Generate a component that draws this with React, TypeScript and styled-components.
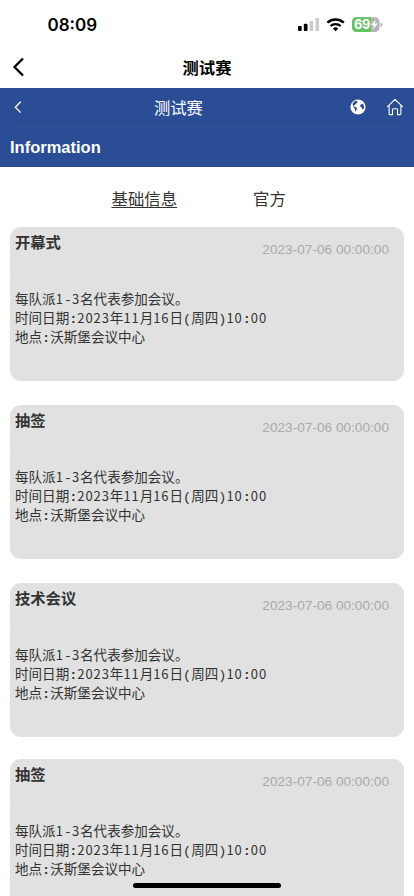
import React from "react";
import styled, { createGlobalStyle } from "styled-components";

const Global = createGlobalStyle`
  * { box-sizing: border-box; }
  html, body { margin: 0; height: 896px; overflow: hidden; background: #fff; }
  body { font-family: "Liberation Sans", "Noto Sans CJK SC", sans-serif; color: #333; }
`;

const Screen = styled.div`
  position: relative;
  width: 414px;
  height: 896px;
  overflow: hidden;
  background: #fff;
`;
const StatusBar = styled.div`
  height: 48px;
  display: flex;
  align-items: center;
  justify-content: space-between;
  padding: 2px 31px 0 47.5px;
`;
const Clock = styled.span`
  font: 600 17px/24px Inter, sans-serif;
  color: #000;
`;
const StatusIcons = styled.div`
  display: flex;
  align-items: center;
  svg { display: block; }
`;
const NavBar = styled.div`
  height: 40px;
  display: grid;
  grid-template-columns: 40px 1fr 40px;
  align-items: center;
  padding-bottom: 2px;
`;
const NavBack = styled.svg`
  margin-left: 11px;
  display: block;
`;
const NavTitle = styled.div`
  text-align: center;
  font: 700 16.3px/24px "Noto Sans CJK SC", sans-serif;
  color: #000;
`;
const Header = styled.header`
  height: 78.5px;
  padding: 0 10px;
  background: #2b4d95;
  color: #fff;
`;
const HeaderTop = styled.div`
  height: 39px;
  display: flex;
  align-items: center;
  border-bottom: 1px solid #35548f;
  svg { display: block; flex: none; }
`;
const HeaderTitle = styled.div`
  width: 50px;
  margin: 0 147px 0 132px;
  white-space: nowrap;
  font: 400 16.3px/24px "Noto Sans CJK SC", sans-serif;
`;
const HeaderIcons = styled.div`
  display: flex;
  align-items: center;
  gap: 20px;
`;
const Section = styled.div`
  font: 700 16.5px/41px "Liberation Sans", sans-serif;
`;
const Tabs = styled.nav`
  height: 59px;
  display: flex;
  gap: 76px;
  padding: 19px 0 0 111.5px;
`;
const Tab = styled.span<{ $active?: boolean }>`
  font: 400 16.4px/24px "Noto Sans CJK SC", sans-serif;
  text-decoration: ${(p) => (p.$active ? "underline" : "none")};
  text-decoration-thickness: 1px;
  text-underline-offset: 2px;
`;
const List = styled.main`
  padding: 1px 10px 0;
`;
const Card = styled.article<{ $gap: number }>`
  height: 154.5px;
  margin-bottom: ${(p) => p.$gap}px;
  border-radius: 11px;
  background: #e1e1e1;
`;
const CardHead = styled.div`
  height: 47.5px;
  display: flex;
  justify-content: space-between;
  padding: 0 15px 0 5px;
  border-bottom: 1px solid #e6e6e6;
`;
const CardTitle = styled.h2`
  margin: 2px 0 0;
  font: 700 15.3px/24px "Noto Sans CJK SC", sans-serif;
`;
const CardDate = styled.time`
  margin-top: 11.4px;
  font: 400 13.65px/24px "Liberation Sans", sans-serif;
  color: #aaa;
`;
const CardBody = styled.div`
  padding: 16.5px 5px 0;
`;
const Line = styled.div`
  height: 19.4px;
  white-space: pre;
  font: 400 13.55px/19.4px "Liberation Mono", "Noto Sans CJK SC", monospace;
`;
const Digits = styled.span`
  font-family: "Noto Sans CJK SC", sans-serif;
  font-size: 13px;
  line-height: 0;
  letter-spacing: 0.91px;
`;
const Colon = styled.span`
  font-weight: 700;
`;
const HomeIndicator = styled.div`
  position: absolute;
  left: 133px;
  bottom: 8px;
  width: 148px;
  height: 5px;
  border-radius: 3px;
  background: #000;
`;

const cards = [
  { title: "开幕式", gap: 23.5 },
  { title: "抽签", gap: 23.5 },
  { title: "技术会议", gap: 21.5 },
  { title: "抽签", gap: 0 },
];
const details = ["每队派1-3名代表参加会议。", "时间日期:2023年11月16日(周四)10:00", "地点:沃斯堡会议中心"];

const renderRuns = (line: string) =>
  line.split(/(\d+|:)/).map((run, i) => {
    if (run === ":") return <Colon key={i}>:</Colon>;
    if (/^\d+$/.test(run)) return <Digits key={i}>{run}</Digits>;
    return run;
  });

const StatusGlyphs = () => (
  <svg width="86" height="18" viewBox="297 16 86 18">
    <rect x="298" y="26" width="3.7" height="5" rx="1" fill="#000" />
    <rect x="303.8" y="23.7" width="3.7" height="7.3" rx="1" fill="#000" />
    <rect x="309.6" y="21" width="3.7" height="10" rx="1" fill="#ccc" />
    <rect x="315.4" y="18" width="3.7" height="13" rx="1" fill="#ccc" />
    <path d="M327.4 22.6a12.2 12.2 0 0 1 16.4 0" fill="none" stroke="#000" strokeWidth="2.4" />
    <path d="M330.5 26a7.7 7.7 0 0 1 10.2 0" fill="none" stroke="#000" strokeWidth="2.3" />
    <path d="M332.9 28.5a4 4 0 0 1 5.4 0L335.6 31.3Z" fill="#000" />
    <clipPath id="cell"><rect x="352" y="17.3" width="27.5" height="14.7" rx="4.5" /></clipPath>
    <g clipPath="url(#cell)">
      <rect x="352" y="17" width="28" height="16" fill="#b4b4b4" />
      <rect x="352" y="17" width="19" height="16" fill="#65c466" />
    </g>
    <path d="M380.5 22.5q1.8.5 1.8 2.2t-1.8 2.2Z" fill="#b4b4b4" />
    <text x="354" y="29.4" fontFamily="Inter" fontWeight="700" fontSize="12.8" fill="#fff" textLength="16.2">69</text>
    <path d="M375.7 19.5l-5 5.8h3.3l-1.2 4.3 5.2-6h-3.4Z" fill="#fff" />
  </svg>
);

export default function App() {
  return (
    <>
      <Global />
      <Screen>
        <StatusBar>
          <Clock>08:09</Clock>
          <StatusIcons><StatusGlyphs /></StatusIcons>
        </StatusBar>
        <NavBar>
          <NavBack width="15" height="20" viewBox="0 0 15 20" fill="none" stroke="#000" strokeWidth="2.3">
            <path d="M12 1.5L3.5 10l8.5 8.5" />
          </NavBack>
          <NavTitle>测试赛</NavTitle>
        </NavBar>
        <Header>
          <HeaderTop>
            <svg width="12" height="14" viewBox="0 0 12 14" fill="none" stroke="#fff" strokeWidth="1.3">
              <path d="M10.7 1.8L5.3 7.2l5.4 5.4" />
            </svg>
            <HeaderTitle>测试赛</HeaderTitle>
            <HeaderIcons>
              <svg width="16" height="16" viewBox="0 0 16 16">
                <circle cx="8" cy="8" r="7.6" fill="#fff" />
                <path d="M2.7 4.4L4 2.7l1.8-1 1.7.3-.8 1 1 .5-1.8 1.2-.9 1.3-1.1.2-.3.9 1.2.6 1.5.7.9 1.2-.8 1.2-.5 1.6-.8-.5-.2-2-1.3-1.8-.7-1.6Z M11 5.2l1.6-.5 1.3 1.8.2 2.4-1.1 1.7-.8-.4-.3-1.6-1.2-.3-.6-1.6Z" fill="#2b4d95" />
              </svg>
              <svg width="18" height="18" viewBox="0 0 18 18" fill="none" stroke="#fff" strokeWidth="1.1" strokeLinejoin="round" strokeLinecap="round">
                <path d="M1.5 8.7L9 1.3l7.5 7.4M3.1 7.5v8.3q0 .8.8.8h2.6v-5q0-.9.9-.9h3.2q.9 0 .9.9v5h2.6q.8 0 .8-.8V7.5" />
              </svg>
            </HeaderIcons>
          </HeaderTop>
          <Section>Information</Section>
        </Header>
        <Tabs>
          <Tab $active>基础信息</Tab>
          <Tab>官方</Tab>
        </Tabs>
        <List>
          {cards.map((card, i) => (
            <Card key={i} $gap={card.gap}>
              <CardHead>
                <CardTitle>{card.title}</CardTitle>
                <CardDate>2023-07-06 00:00:00</CardDate>
              </CardHead>
              <CardBody>
                {details.map((line) => (
                  <Line key={line}>{renderRuns(line)}</Line>
                ))}
              </CardBody>
            </Card>
          ))}
        </List>
        <HomeIndicator />
      </Screen>
    </>
  );
}
